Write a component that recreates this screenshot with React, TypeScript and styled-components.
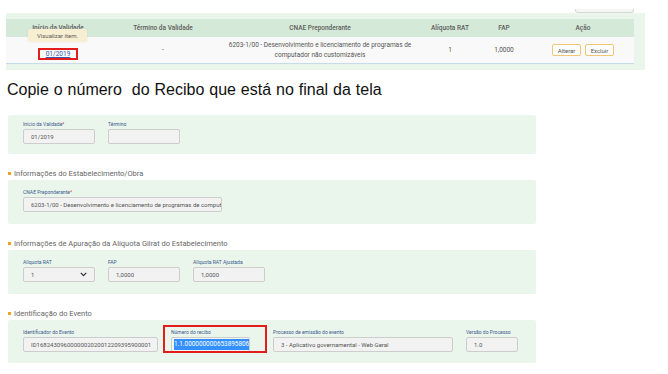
import React from "react";
import styled, { createGlobalStyle } from "styled-components";

const Global = createGlobalStyle`
  html, body { margin: 0; padding: 0; background: #ffffff; }
  body { font-family: Roboto, "Liberation Sans", Arial, sans-serif; }
`;

const Page = styled.div`
  width: 668px;
  height: 374px;
  overflow: hidden;
  background: #fff;
`;

const TopStrip = styled.div`
  height: 13px;
  width: 639px;
  margin-left: 6px;
  display: flex;
  justify-content: flex-end;
  align-items: flex-end;
`;

const Stub = styled.div`
  width: 57px;
  height: 3px;
  margin-right: 11px;
  border: 1px solid #d6d9d6;
  border-top: none;
  border-radius: 0 0 3px 3px;
  background: #f4f6f4;
`;

const TablePanel = styled.div`
  width: 639px;
  margin-left: 6px;
  padding: 6px 11px 6px 0;
  box-sizing: border-box;
  background: #eaf5ec;
`;

const Table = styled.table`
  width: 628px;
  border-collapse: collapse;
  table-layout: fixed;
  font-size: 6.5px;
  color: #555;
`;

const Th = styled.th<{ $w: number }>`
  width: ${(p) => p.$w}px;
  height: 18px;
  padding: 0;
  background: #d4e9d7;
  font-weight: 500;
  color: #5c5c5c;
  text-align: center;
`;

const Td = styled.td`
  height: 26px;
  padding: 0;
  background: #f9f9f9;
  border-bottom: 1px solid #c8dbe9;
  text-align: center;
  line-height: 10px;
  position: relative;
`;

const Tooltip = styled.div`
  position: absolute;
  left: 22px;
  top: -8px;
  width: 59px;
  height: 13px;
  line-height: 13px;
  background: #f8efd3;
  color: #5a5a5a;
  border-radius: 2px;
  font-size: 6px;
  text-align: center;
  box-shadow: 0 0 2px rgba(0, 0, 0, 0.08);
`;

const LinkBox = styled.span`
  display: inline-block;
  margin-top: 8px;
  padding: 0 6px;
  height: 8px;
  line-height: 8px;
  border: 2px solid #e31c1c;
`;

const ItemLink = styled.a`
  color: #3a58b0;
  text-decoration: underline;
  font-size: 6.5px;
`;

const ActionButton = styled.button`
  width: 29px;
  height: 12px;
  margin: 0 2px;
  padding: 0;
  border: 1px solid #f1c775;
  border-radius: 2px;
  background: #fff;
  color: #555;
  font-family: Roboto, sans-serif;
  font-size: 6px;
`;

const Heading = styled.h1`
  margin: 10px 0 0 7px;
  font-family: "Liberation Sans", Arial, sans-serif;
  font-weight: 400;
  font-size: 16px;
  word-spacing: 0.5px;
  line-height: 20px;
  color: #111;
  white-space: pre;
`;

const FormPanel = styled.div<{ $top: number; $bottom: number }>`
  width: 528px;
  margin-left: 8px;
  padding: ${(p) => p.$top}px 15px ${(p) => p.$bottom}px;
  box-sizing: border-box;
  background: #eaf5ec;
  border-radius: 2px;
`;

const FirstPanel = styled(FormPanel)`
  margin-top: 15px;
`;

const SectionTitle = styled.div`
  margin: 14px 0 2px 8px;
  display: flex;
  align-items: center;
  gap: 3px;
  height: 10px;
  font-size: 7.5px;
  color: #666;
`;

const Bullet = styled.span`
  width: 3px;
  height: 3px;
  background: #f0a21e;
`;

const Row = styled.div`
  display: flex;
  gap: 13px;
`;

const Field = styled.div<{ $w: number; $after?: number }>`
  width: ${(p) => p.$w}px;
  margin-right: ${(p) => p.$after ?? 0}px;
  display: flex;
  flex-direction: column;
  position: relative;
`;

const Label = styled.label`
  font-size: 5px;
  line-height: 9px;
  color: #3d5b8c;
  white-space: nowrap;
`;

const Req = styled.span`
  color: #d33;
`;

const Input = styled.div`
  height: 15px;
  box-sizing: border-box;
  border: 1px solid #cdcdcd;
  border-radius: 2px;
  background: #f2f2f2;
  padding: 0 7px;
  display: flex;
  align-items: center;
  justify-content: space-between;
  font-size: 6px;
  color: #555;
  white-space: nowrap;
  overflow: hidden;
`;

const ReciboInput = styled(Input)`
  padding: 0 1px 0 2px;
  background: #f4f4f4;
  font-size: 6.4px;
`;

const Selected = styled.span`
  background: #3391ff;
  color: #fff;
  line-height: 11px;
`;

const RedFrame = styled.div`
  position: absolute;
  left: -8px;
  top: -3px;
  right: -17px;
  bottom: -1px;
  border: 2px solid #e31c1c;
  pointer-events: none;
`;

const Chevron = () => (
  <svg width="7" height="5" viewBox="0 0 7 5">
    <path d="M0.8 0.9 L3.5 3.6 L6.2 0.9" fill="none" stroke="#333" strokeWidth="1.3" />
  </svg>
);

export default function App() {
  return (
    <Page>
      <Global />
      <TopStrip>
        <Stub />
      </TopStrip>
      <TablePanel>
        <Table>
          <thead>
            <tr>
              <Th $w={104}>Início da Validade</Th>
              <Th $w={106}>Término da Validade</Th>
              <Th $w={208}>CNAE Preponderante</Th>
              <Th $w={52}>Alíquota RAT</Th>
              <Th $w={56}>FAP</Th>
              <Th $w={102}>Ação</Th>
            </tr>
          </thead>
          <tbody>
            <tr>
              <Td>
                <Tooltip>Visualizar item.</Tooltip>
                <LinkBox>
                  <ItemLink href="#">01/2019</ItemLink>
                </LinkBox>
              </Td>
              <Td>-</Td>
              <Td>
                6203-1/00 - Desenvolvimento e licenciamento de programas de
                <br />
                computador não customizáveis
              </Td>
              <Td>1</Td>
              <Td>1,0000</Td>
              <Td>
                <ActionButton>Alterar</ActionButton>
                <ActionButton>Excluir</ActionButton>
              </Td>
            </tr>
          </tbody>
        </Table>
      </TablePanel>

      <Heading>{"Copie o número  do Recibo que está no final da tela"}</Heading>

      <FirstPanel $top={5} $bottom={10}>
        <Row>
          <Field $w={72}>
            <Label>
              Início da Validade<Req>*</Req>
            </Label>
            <Input>01/2019</Input>
          </Field>
          <Field $w={72}>
            <Label>Término</Label>
            <Input />
          </Field>
        </Row>
      </FirstPanel>

      <SectionTitle>
        <Bullet />
        Informações do Estabelecimento/Obra
      </SectionTitle>
      <FormPanel $top={8} $bottom={12}>
        <Row>
          <Field $w={199}>
            <Label>
              CNAE Preponderante<Req>*</Req>
            </Label>
            <Input>6203-1/00 - Desenvolvimento e licenciamento de programas de computador não customizáveis</Input>
          </Field>
        </Row>
      </FormPanel>

      <SectionTitle>
        <Bullet />
        Informações de Apuração da Alíquota Gilrat do Estabelecimento
      </SectionTitle>
      <FormPanel $top={8} $bottom={12}>
        <Row>
          <Field $w={72}>
            <Label>Alíquota RAT</Label>
            <Input>
              1
              <Chevron />
            </Input>
          </Field>
          <Field $w={72}>
            <Label>FAP</Label>
            <Input>1,0000</Input>
          </Field>
          <Field $w={72}>
            <Label>Alíquota RAT Ajustada</Label>
            <Input>1,0000</Input>
          </Field>
        </Row>
      </FormPanel>

      <SectionTitle>
        <Bullet />
        Identificação do Evento
      </SectionTitle>
      <FormPanel $top={8} $bottom={11}>
        <Row>
          <Field $w={135}>
            <Label>Identificador do Evento</Label>
            <Input>ID1682430960000002020012209395900001</Input>
          </Field>
          <Field $w={79} $after={10}>
            <RedFrame />
            <Label>Número do recibo</Label>
            <ReciboInput>
              <Selected>1.1.0000000006538958064</Selected>
            </ReciboInput>
          </Field>
          <Field $w={180}>
            <Label>Processo de emissão do evento</Label>
            <Input>3 - Aplicativo governamental - Web Geral</Input>
          </Field>
          <Field $w={52}>
            <Label>Versão do Processo</Label>
            <Input>1.0</Input>
          </Field>
        </Row>
      </FormPanel>
    </Page>
  );
}
